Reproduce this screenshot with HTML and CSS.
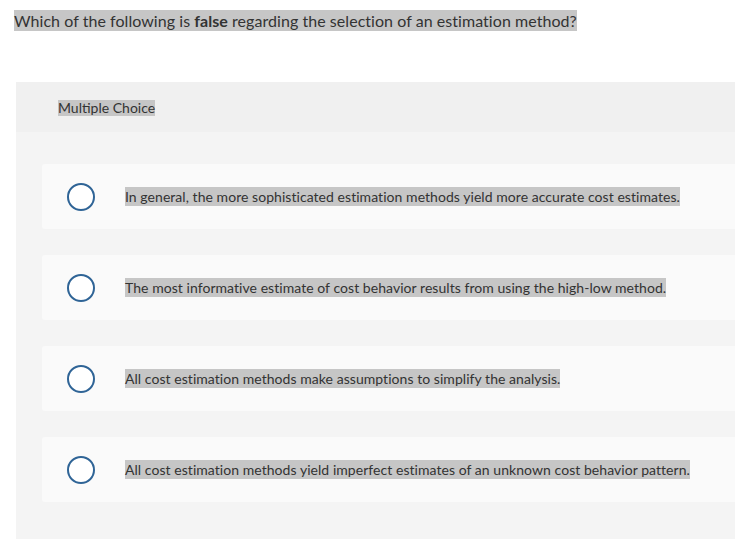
FILE: index.html
```html
<!DOCTYPE html>
<html>
<head>
<meta charset="utf-8">
<link rel="stylesheet" href="styles.css">
</head>
<body>
<div class="question"><span class="sel">Which of the following is <b>false</b> regarding the selection of an estimation method?</span></div>
<div class="panel">
  <div class="panel-head"><span class="sel label">Multiple Choice</span></div>
  <div class="options">
    <div class="card"><span class="radio"></span><span class="sel opt">In general, the more sophisticated estimation methods yield more accurate cost estimates.</span></div>
    <div class="card"><span class="radio"></span><span class="sel opt">The most informative estimate of cost behavior results from using the high-low method.</span></div>
    <div class="card"><span class="radio"></span><span class="sel opt">All cost estimation methods make assumptions to simplify the analysis.</span></div>
    <div class="card"><span class="radio"></span><span class="sel opt">All cost estimation methods yield imperfect estimates of an unknown cost behavior pattern.</span></div>
  </div>
</div>
</body>
</html>
```
FILE: styles.css
```css
html, body {
  margin: 0;
  padding: 0;
  background: #ffffff;
  overflow: hidden;
}
body {
  font-family: Lato, "Open Sans", sans-serif;
  color: #333333;
  width: 735px;
  height: 539px;
}
.sel {
  background: #c6c6c6;
}
.question {
  padding: 10px 0 0 14px;
  font-size: 16px;
  line-height: 21px;
  height: 21px;
}
.question .sel {
  display: inline-block;
  line-height: 21px;
  letter-spacing: 0.05px;
}
.question b {
  font-weight: 700;
}
.panel {
  margin: 51px 0 0 16px;
  background: #f4f4f4;
  height: 460px;
}
.panel-head {
  background: #f0f0f0;
  height: 50px;
  padding-left: 42px;
  padding-top: 15px;
  box-sizing: border-box;
}
.label {
  display: inline-block;
  font-size: 14px;
  line-height: 16px;
}
.options {
  padding: 32px 0 0 26px;
  display: flex;
  flex-direction: column;
  gap: 26px;
}
.card {
  background: #fafafa;
  border-radius: 3px 0 0 3px;
  height: 65px;
  display: flex;
  align-items: center;
  padding-left: 25px;
}
.radio {
  width: 28px;
  height: 28px;
  box-sizing: border-box;
  border: 2px solid #2f6496;
  border-radius: 50%;
  background: #ffffff;
  flex: none;
}
.opt {
  margin-left: 30px;
  font-size: 14px;
  line-height: 19px;
  letter-spacing: 0.05px;
}
```
